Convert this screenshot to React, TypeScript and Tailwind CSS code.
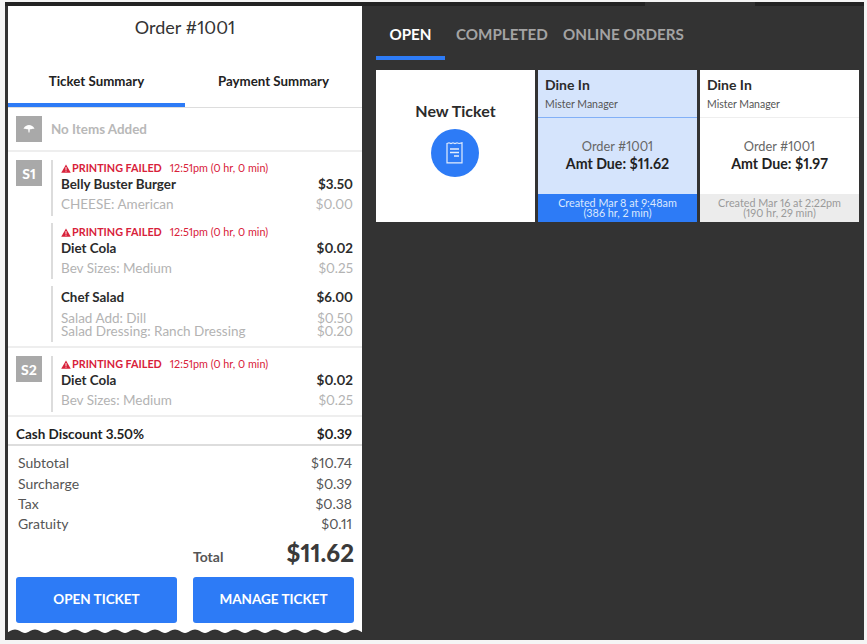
import React from "react";

const font = { fontFamily: '"Lato", "Liberation Sans", sans-serif' };

const FailedLine = () => (
  <div className="flex items-center h-[16px] text-[10.8px] text-[#d8213a] leading-none">
    <svg width="10" height="9" viewBox="0 0 11 10" className="shrink-0">
      <path d="M5.5 0.5 L10.8 9.7 H0.2 Z" fill="#d8213a" />
      <rect x="5" y="3.4" width="1" height="3.2" fill="#fff" />
      <rect x="5" y="7.3" width="1" height="1.2" fill="#fff" />
    </svg>
    <span className="font-bold ml-[1px]">PRINTING FAILED</span>
    <span className="ml-[8px]">12:51pm (0 hr, 0 min)</span>
  </div>
);

const Mod = ({ label, price }: { label: string; price: string }) => (
  <div className="flex justify-between text-[13.5px] leading-[13px] text-[#b3b3b3]">
    <span>{label}</span>
    <span>{price}</span>
  </div>
);

const Item = ({
  failed,
  name,
  price,
  mods,
  className,
}: {
  failed?: boolean;
  name: string;
  price: string;
  mods: { label: string; price: string }[];
  className: string;
}) => (
  <div className={`border-l-2 border-[#dcdcdc] pl-[8px] pr-[1px] ${className}`}>
    {failed ? <FailedLine /> : <div className="h-[3px]" />}
    <div className="flex justify-between text-[13.4px] font-bold text-[#2b2b2b] leading-[16px]">
      <span>{name}</span>
      <span>{price}</span>
    </div>
    <div className={`flex flex-col ${failed ? "mt-[6px]" : "mt-[7px]"}`}>
      {mods.map((m) => (
        <Mod key={m.label} {...m} />
      ))}
    </div>
  </div>
);

const SeatBadge = ({ children }: { children: React.ReactNode }) => (
  <div className="w-[26px] h-[26px] bg-[#a9a9a9] text-white text-[14px] font-black flex items-center justify-center shrink-0">
    {children}
  </div>
);

const TotalRow = ({ label, value }: { label: string; value: string }) => (
  <div className="flex justify-between h-[20.4px] items-center text-[14px] text-[#555]">
    <span>{label}</span>
    <span>{value}</span>
  </div>
);

const TicketCard = ({
  selected,
  amount,
  created,
  elapsed,
}: {
  selected?: boolean;
  amount: string;
  created: string;
  elapsed: string;
}) => (
  <div className={`w-[159px] h-[152px] flex flex-col ${selected ? "bg-[#d5e4fc]" : "bg-white"}`}>
    <div className={`h-[48px] px-[7px] pt-[6px] border-b ${selected ? "border-[#82b0f7]" : "border-[#eeeeee]"}`}>
      <div className="text-[14px] font-bold text-[#2b2b2b] leading-[17px]">Dine In</div>
      <div className="text-[10.5px] text-[#555] leading-[13px] mt-[5px]">Mister Manager</div>
    </div>
    <div className="flex-1 flex flex-col items-center justify-center pb-[2px]">
      <div className="text-[12.8px] text-[#666] leading-[18px]">Order #1001</div>
      <div className="text-[14.2px] font-bold text-[#222] leading-[18px]">Amt Due: {amount}</div>
    </div>
    <div
      className={`h-[28px] flex flex-col items-center justify-center pb-[1px] text-[10.8px] leading-[10px] ${
        selected ? "bg-[#2d7bf6] text-[#dbe8fd]" : "bg-[#ececec] text-[#9a9a9a]"
      }`}
    >
      <div>{created}</div>
      <div>{elapsed}</div>
    </div>
  </div>
);

export default function App() {
  return (
    <div className="w-[867px] h-[644px] bg-[#f5f5f5] pt-[2px] pl-[5px] overflow-hidden proportional-nums" style={font}>
      <div className="w-[859px] h-[638px] bg-[#333333] flex flex-col">
        <div className="h-[4px] flex shrink-0">
          <div className="w-[640px] bg-[#232323]" />
          <div className="w-[110px] bg-[#333333]" />
          <div className="flex-1 bg-[#232323]" />
        </div>
        <div className="flex flex-1 pl-[3px]">
          <div className="w-[354px] h-[630px] bg-white flex flex-col shrink-0">
            <div className="h-[43px] flex items-center justify-center text-[18px] text-[#333]">
              Order #1001
            </div>
            <div className="flex h-[59px] border-b border-[#dddddd]">
              <div className="w-[177px] flex items-center justify-center text-[13.3px] font-bold text-[#222] border-b-[4px] border-[#2d7bf6] pt-[12px]">
                Ticket Summary
              </div>
              <div className="w-[177px] flex items-center justify-center text-[13.3px] font-bold text-[#222] pt-[8px]">
                Payment Summary
              </div>
            </div>

            <div className="h-[44px] flex items-center px-[8px] gap-[9px] border-b-2 border-[#eeeeee] shrink-0">
              <div className="w-[26px] h-[26px] bg-[#a9a9a9] flex items-center justify-center">
                <svg width="12" height="8" viewBox="0 0 12 8">
                  <path d="M0.5 4 C1.5 1 4 0 6 0 C8 0 10.5 1 11.5 4 C10 3.5 9 3.8 8 4.2 L6.8 4.2 L6.5 7.5 H5.5 L5.2 4.2 L4 4.2 C3 3.8 2 3.5 0.5 4 Z" fill="#fff" />
                </svg>
              </div>
              <span className="text-[13.4px] font-bold text-[#b8b8b8]">No Items Added</span>
            </div>

            <div className="h-[196px] flex px-[8px] pt-[8px] gap-[9px] border-b-2 border-[#eeeeee] shrink-0">
              <SeatBadge>S1</SeatBadge>
              <div className="flex-1 flex flex-col gap-[7px]">
                <Item
                  failed
                  className="h-[56px]"
                  name="Belly Buster Burger"
                  price="$3.50"
                  mods={[{ label: "CHEESE: American", price: "$0.00" }]}
                />
                <Item
                  failed
                  className="h-[56px] pt-[1px]"
                  name="Diet Cola"
                  price="$0.02"
                  mods={[{ label: "Bev Sizes: Medium", price: "$0.25" }]}
                />
                <Item
                  className="h-[56px]"
                  name="Chef Salad"
                  price="$6.00"
                  mods={[
                    { label: "Salad Add: Dill", price: "$0.50" },
                    { label: "Salad Dressing: Ranch Dressing", price: "$0.20" },
                  ]}
                />
              </div>
            </div>

            <div className="h-[69px] flex px-[8px] pt-[8px] gap-[9px] border-b-2 border-[#eeeeee] shrink-0">
              <SeatBadge>S2</SeatBadge>
              <div className="flex-1">
                <Item
                  failed
                  className="h-[56px]"
                  name="Diet Cola"
                  price="$0.02"
                  mods={[{ label: "Bev Sizes: Medium", price: "$0.25" }]}
                />
              </div>
            </div>

            <div className="h-[29px] flex items-center justify-between px-[8px] pr-[10px] pt-[7px] text-[13.5px] font-bold text-[#1f1f1f] border-b-2 border-[#dddddd] shrink-0">
              <span>Cash Discount 3.50%</span>
              <span>$0.39</span>
            </div>

            <div className="pl-[10px] pr-[10px] pt-[6.5px] shrink-0">
              <TotalRow label="Subtotal" value="$10.74" />
              <TotalRow label="Surcharge" value="$0.39" />
              <TotalRow label="Tax" value="$0.38" />
              <TotalRow label="Gratuity" value="$0.11" />
            </div>

            <div className="flex items-end h-[37px] pl-[185px] pr-[8px] pb-[5px] shrink-0 mt-[0.5px]">
              <span className="text-[14px] font-bold text-[#555] leading-[20px] flex-1">Total</span>
              <span className="text-[24px] font-black text-[#3a3a3a] leading-[28px]">$11.62</span>
            </div>

            <div className="flex gap-[16px] px-[8px] mt-[5px] shrink-0">
              <button className="w-[161px] h-[46px] rounded-[3px] bg-[#2d7bf6] text-white text-[13.5px] font-bold pb-[1px]">
                OPEN TICKET
              </button>
              <button className="w-[161px] h-[46px] rounded-[3px] bg-[#2d7bf6] text-white text-[13.5px] font-bold pb-[1px]">
                MANAGE TICKET
              </button>
            </div>

            <svg className="mt-auto block shrink-0" width="354" height="7" viewBox="0 0 354 7">
              <defs>
                <pattern id="scallop" x="-3" y="0" width="20" height="7" patternUnits="userSpaceOnUse">
                  <path d="M0 4 C4 3.5 6 0.5 10 0.5 C14 0.5 16 3.5 20 4 V7 H0 Z" fill="#333333" />
                </pattern>
              </defs>
              <rect width="354" height="7" fill="url(#scallop)" />
            </svg>
          </div>

          <div className="flex-1 flex flex-col pl-[14px]">
            <div className="flex h-[54px] items-stretch shrink-0">
              <div className="w-[69px] flex items-center justify-center text-[15.2px] font-bold text-white border-b-[4px] border-[#2d7bf6] pt-[6px]">
                OPEN
              </div>
              <div className="ml-[11px] w-[93px] flex items-center text-[15.2px] font-bold text-[#a3a3a3] pt-[2px]">
                COMPLETED
              </div>
              <div className="ml-[14px] flex items-center text-[15.2px] font-bold text-[#a3a3a3] pt-[2px]">
                ONLINE ORDERS
              </div>
            </div>
            <div className="flex gap-[3px] mt-[10px]">
              <div className="w-[159px] h-[152px] bg-white flex flex-col items-center pt-[32px]">
                <div className="text-[16px] font-bold text-[#2b2b2b] leading-[18px]">New Ticket</div>
                <div className="w-[48px] h-[48px] rounded-full bg-[#2d7bf6] flex items-center justify-center mt-[10px] -translate-x-[1px] -translate-y-[1px]">
                  <svg width="17" height="22" viewBox="0 0 17 22" fill="none" stroke="#e3edfd" strokeWidth="1.2">
                    <path d="M1 1.5 L3 0.8 L5 1.5 L7 0.8 L9 1.5 L11 0.8 L13 1.5 L16 0.8 V20.8 H1 Z" />
                    <path d="M4 7 H13 M4 10.5 H13 M8 14 H13" strokeWidth="1.4" />
                  </svg>
                </div>
              </div>
              <TicketCard selected amount="$11.62" created="Created Mar 8 at 9:48am" elapsed="(386 hr, 2 min)" />
              <TicketCard amount="$1.97" created="Created Mar 16 at 2:22pm" elapsed="(190 hr, 29 min)" />
            </div>
          </div>
        </div>
      </div>
    </div>
  );
}
